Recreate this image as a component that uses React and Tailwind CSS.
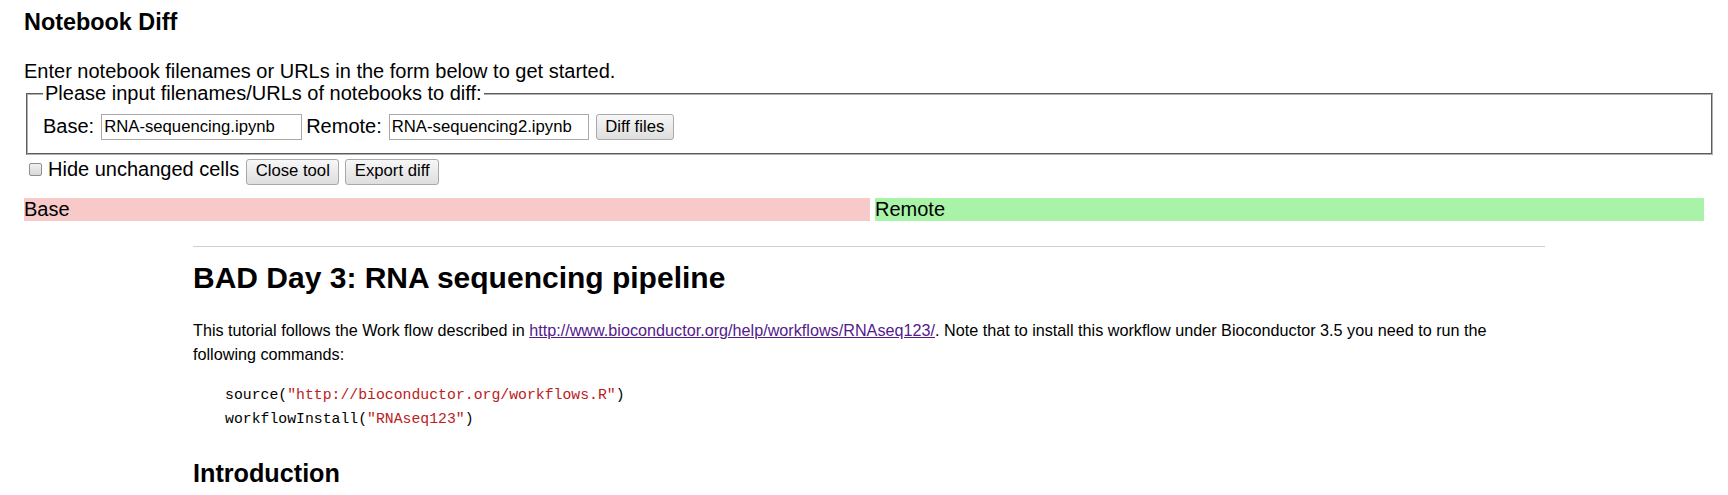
import React from 'react';

const btn =
  'h-[26px] border border-[#a9a9a9] rounded-[3px] bg-gradient-to-b from-[#f7f7f7] to-[#dedede] text-[16.7px] leading-none text-black';

export default function App() {
  return (
    <div className="min-h-screen bg-white pl-[24px] pr-[13px] text-black font-['Liberation_Sans',Arial,sans-serif]">
      <h3 className="pt-[9px] text-[23.4px] leading-[27px] font-bold">Notebook Diff</h3>

      <div className="mt-[24px] text-[20px] leading-[23px]">
        Enter notebook filenames or URLs in the form below to get started.
      </div>

      {/* Form */}
      <fieldset className="-mt-[1px] mx-[2px] border-2 [border-style:groove] border-[#b0b0b0] pt-[10px] px-[15px] pb-[12.5px]">
        <legend className="px-[2px] text-[20px] leading-[23px]">
          Please input filenames/URLs of notebooks to diff:
        </legend>
        <div className="flex items-start text-[20px] leading-[23px]">
          <span>Base:</span>
          <input
            readOnly
            value="RNA-sequencing.ipynb"
            className="ml-[7px] -mt-[1px] w-[201px] h-[26px] border border-[#a9a9a9] px-[2px] text-[16.7px] outline-none"
          />
          <span className="ml-[4px]">Remote:</span>
          <input
            readOnly
            value="RNA-sequencing2.ipynb"
            className="ml-[7px] -mt-[1px] w-[200px] h-[26px] border border-[#a9a9a9] px-[2px] text-[16.7px] outline-none"
          />
          <button className={`${btn} ml-[7px] -mt-[1px] w-[78px]`}>Diff files</button>
        </div>
      </fieldset>

      {/* Options */}
      <div className="mt-[3px] flex items-start text-[20px] leading-[23px]">
        <span className="ml-[5px] mt-[5.5px] w-[13px] h-[13px] rounded-[2px] border border-[#8f8f8f] bg-gradient-to-b from-[#f0f0f0] to-[#d8d8d8]" />
        <span className="ml-[6px]">Hide unchanged cells</span>
        <button className={`${btn} ml-[7px] mt-[1px] w-[93px]`}>Close tool</button>
        <button className={`${btn} ml-[6px] mt-[1px] w-[94px]`}>Export diff</button>
      </div>

      {/* Side headers */}
      <div className="mt-[13.5px] flex text-[20px] leading-[23px]">
        <div className="w-[846px] bg-[#f7c9c9]">Base</div>
        <div className="ml-[5px] w-[829px] bg-[#a8f3a8]">Remote</div>
      </div>

      {/* Notebook */}
      <div className="ml-[169px] w-[1352px]">
        <hr className="mt-[25px] border-0 border-t border-[#d0d0d0]" />
        <h1 className="mt-[14px] text-[30px] leading-[34px] font-bold">
          BAD Day 3: RNA sequencing pipeline
        </h1>
        <p className="mt-[23px] text-[16.2px] leading-[24px]">
          This tutorial follows the Work flow described in{' '}
          <a href="#" className="text-[#551a8b] underline">
            http://www.bioconductor.org/help/workflows/RNAseq123/
          </a>
          . Note that to install this workflow under Bioconductor 3.5 you need to run the following commands:
        </p>
        <pre className="mt-[16.5px] pl-[32px] text-[14.8px] leading-[24px] font-['Liberation_Mono',monospace] text-black">
          {'source('}
          <span className="text-[#ba2121]">"http://bioconductor.org/workflows.R"</span>
          {')\nworkflowInstall('}
          <span className="text-[#ba2121]">"RNAseq123"</span>
          {')'}
        </pre>
        <h2 className="mt-[28px] text-[25.2px] leading-[29px] font-bold">Introduction</h2>
      </div>
    </div>
  );
}
